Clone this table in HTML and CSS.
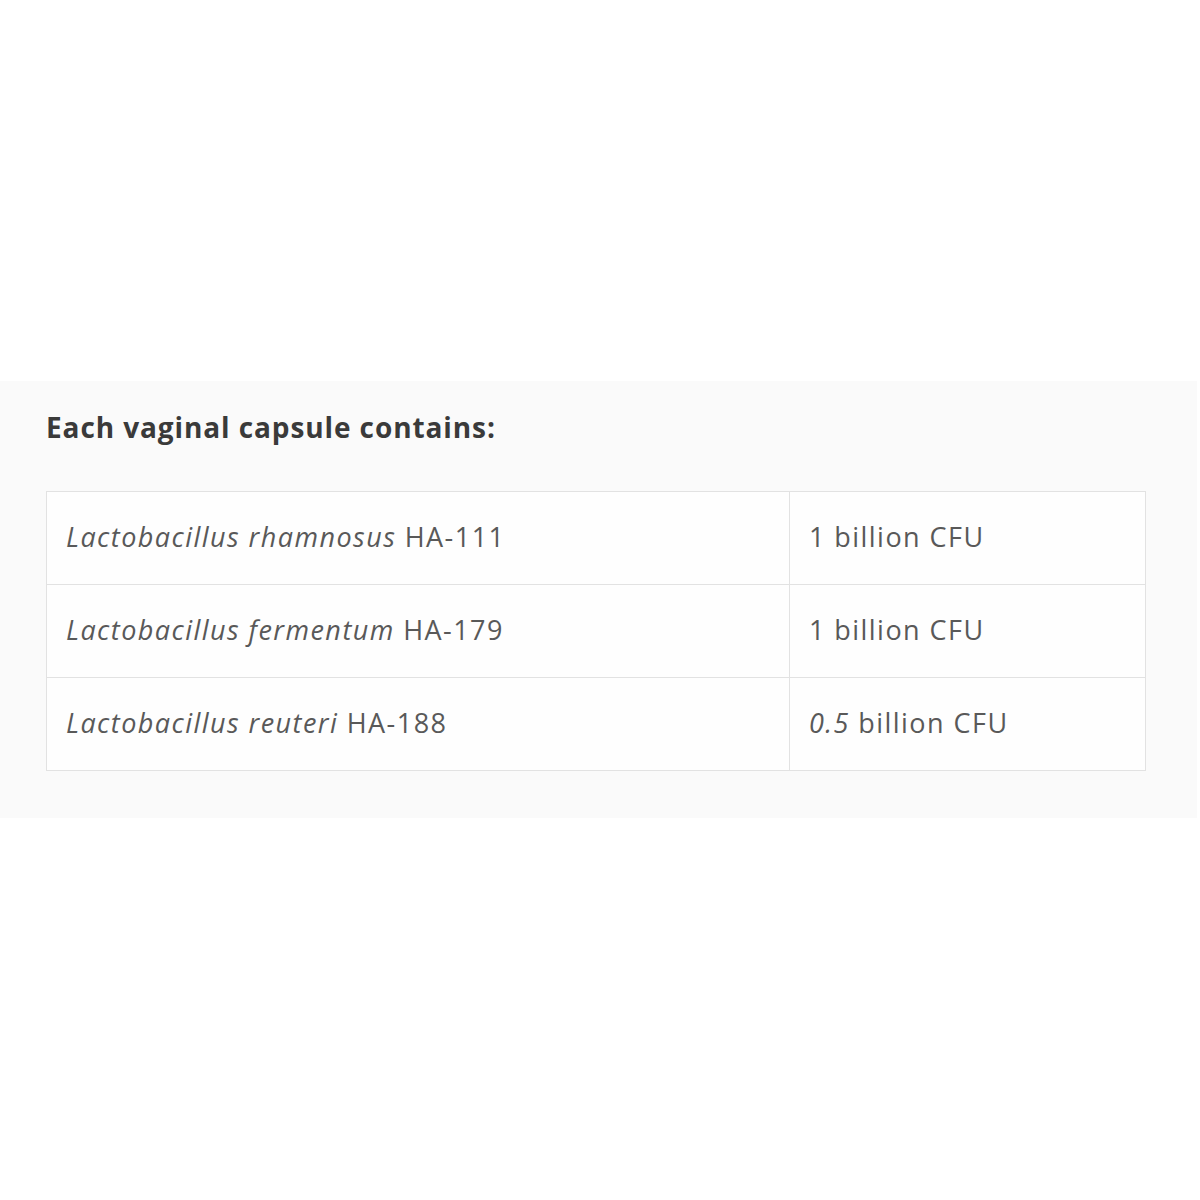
FILE: index.html
```html
<!DOCTYPE html>
<html>
<head>
<meta charset="utf-8">
<link rel="stylesheet" href="styles.css">
</head>
<body>
<div class="spacer"></div>
<section class="panel">
  <h2 class="title">Each vaginal capsule contains:</h2>
  <table class="strains">
    <tr>
      <td class="name"><em>Lactobacillus rhamnosus</em> HA-111</td>
      <td class="amount">1 billion CFU</td>
    </tr>
    <tr>
      <td class="name"><em>Lactobacillus fermentum</em> HA-179</td>
      <td class="amount">1 billion CFU</td>
    </tr>
    <tr>
      <td class="name"><em>Lactobacillus reuteri</em> HA-188</td>
      <td class="amount"><em>0.5</em> billion CFU</td>
    </tr>
  </table>
</section>
</body>
</html>
```
FILE: styles.css
```css
html, body {
  margin: 0;
  padding: 0;
  background: #ffffff;
}
body {
  font-family: "Open Sans", "DejaVu Sans", sans-serif;
  color: #555;
}
.spacer {
  height: 381px;
}
.panel {
  background: #fafafa;
  margin-right: 3px;
  padding: 28px 51px 47px 46px;
}
.title {
  margin: 0 0 46px 0;
  font-size: 28px;
  line-height: 36px;
  font-weight: 700;
  letter-spacing: 0.9px;
  color: #3a3a3a;
}
.strains {
  width: 1100px;
  border-collapse: collapse;
  background: #fefefe;
}
.strains td {
  border: 1px solid #e2e2e2;
  height: 89px;
  padding: 0 0 3px 19px;
  font-size: 27px;
  letter-spacing: 1.45px;
  color: #595959;
  vertical-align: middle;
}
.strains td.name {
  width: 723px;
}
.strains em {
  font-style: italic;
}
```
